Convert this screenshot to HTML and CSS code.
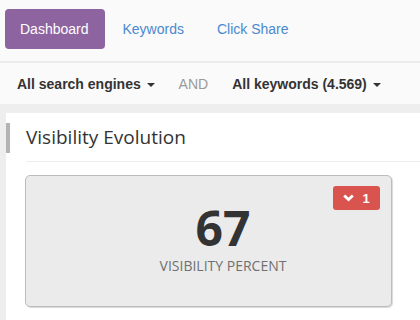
FILE: index.html
```html
<!DOCTYPE html>
<html lang="en">
<head>
    <meta charset="UTF-8">
    <title>Visibility</title>
    <link rel="stylesheet" href="styles.css">
</head>
<body>

<nav class="topnav">
    <a class="pill active" href="#">Dashboard</a>
    <a class="pill" href="#">Keywords</a>
    <a class="pill" href="#">Click Share</a>
</nav>

<div class="filters">
    <span class="dropdown">All search engines <span class="caret"></span></span>
    <span class="and">AND</span>
    <span class="dropdown">All keywords (4.569) <span class="caret"></span></span>
</div>

<div class="main">
    <div class="panel">
        <h2 class="panel-title">Visibility Evolution</h2>

        <div class="stat-card">
            <span class="badge">
                <svg width="11" height="8" viewBox="0 0 11 8"><path d="M1.2 1.5 L5.5 5.6 L9.8 1.5" fill="none" stroke="#fff" stroke-width="2.8"/></svg>
                1
            </span>
            <div class="stat-value">67</div>
            <div class="stat-label">VISIBILITY PERCENT</div>
        </div>
    </div>
</div>

</body>
</html>
```

FILE: styles.css
```css
body {
    margin: 0;
    background: #eeeeee;
    font-family: 'Liberation Sans', Arial, sans-serif;
    font-size: 14px;
    color: #333;
}

/* Top navigation */
.topnav {
    display: flex;
    background: #fafafa;
    padding: 9px 5px 12px;
    border-bottom: 2px solid #ebebeb;
}
.pill {
    display: block;
    padding: 10px 15px;
    line-height: 20px;
    margin-right: 3px;
    border-radius: 4px;
    color: #4a89cf;
    text-decoration: none;
}
.pill.active {
    background: #8e64a0;
    color: #fff;
    padding: 10px 16px 10px 15px;
}

/* Filters */
.filters {
    display: flex;
    align-items: center;
    gap: 24px;
    height: 41px;
    padding: 0 17px;
    background: #fafafa;
}
.dropdown {
    font-weight: bold;
    color: #333;
}
.caret {
    display: inline-block;
    width: 0;
    height: 0;
    margin-left: 2px;
    vertical-align: middle;
    border-top: 4px solid #333;
    border-left: 4px solid transparent;
    border-right: 4px solid transparent;
}
.and {
    color: #999;
}

/* Panel */
.main {
    padding: 9px 0 0 6px;
}
.panel {
    position: relative;
    background: #fff;
    padding: 9px 0 20px 20px;
    min-height: 200px;
}
.panel::before {
    content: "";
    position: absolute;
    left: 0;
    top: 10px;
    width: 4px;
    height: 30px;
    background: #b3b3b3;
}
.panel-title {
    margin: 0;
    font-family: 'Open Sans', sans-serif;
    font-weight: normal;
    font-size: 19px;
    line-height: 30px;
    color: #333;
    padding-bottom: 9px;
    border-bottom: 1px solid #eee;
}

/* Stat card */
.stat-card {
    position: relative;
    width: 336px;
    margin: 13px 0 0 -1px;
    padding: 28px 0 30px 29px;
    background: #ebebeb;
    border: 1px solid #bcbcbc;
    border-radius: 5px;
    box-shadow: 1px 1px 1px rgba(0, 0, 0, 0.15);
    text-align: center;
    font-family: 'Open Sans', sans-serif;
}
.stat-value {
    font-size: 48px;
    font-weight: bold;
    line-height: 48px;
    color: #333;
}
.stat-label {
    margin-top: 4px;
    font-size: 14px;
    line-height: 20px;
    color: #707070;
}
.badge {
    position: absolute;
    top: 10px;
    right: 11px;
    display: flex;
    align-items: center;
    justify-content: center;
    gap: 8px;
    width: 47px;
    height: 24px;
    border-radius: 3px;
    background: #d9534f;
    color: #fff;
    font-family: 'Liberation Sans', Arial, sans-serif;
    font-weight: bold;
    font-size: 13px;
}
```
